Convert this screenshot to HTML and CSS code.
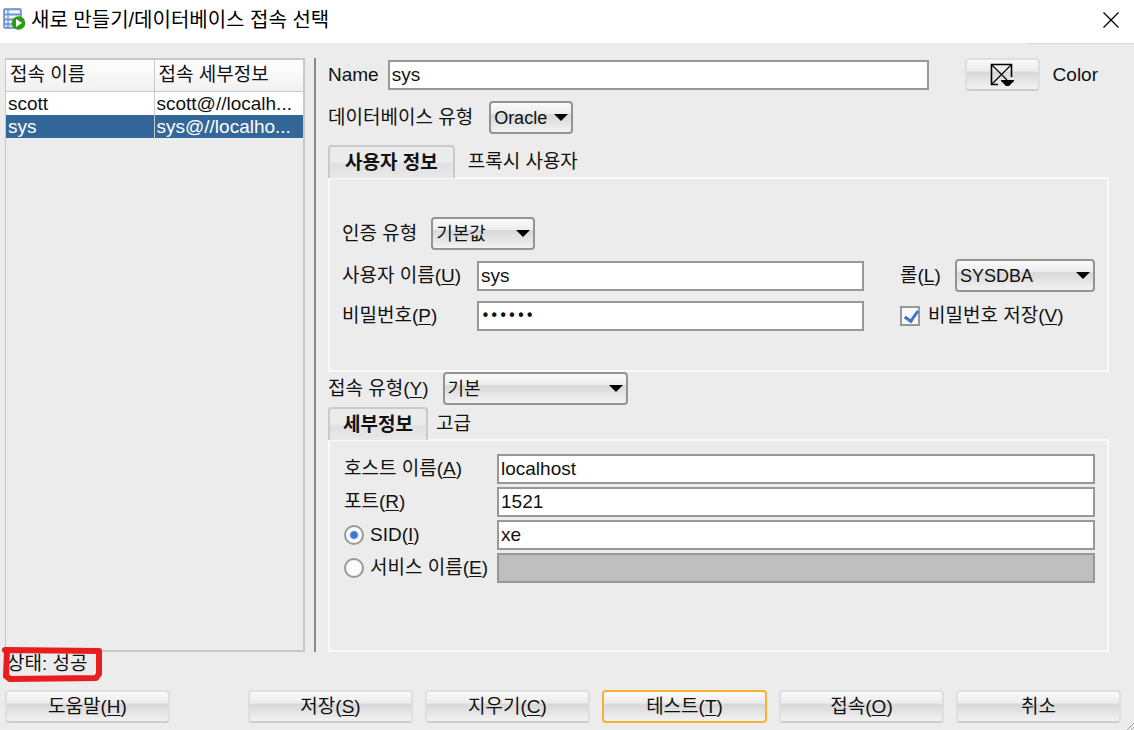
FILE: index.html
```html
<!DOCTYPE html>
<html lang="ko">
<head>
<meta charset="UTF-8">
<meta name="viewport" content="width=device-width, initial-scale=1.0">
<title>새로 만들기/데이터베이스 접속 선택</title>
<link rel="stylesheet" href="styles.css">
</head>
<body>

<header class="titlebar">
  <svg class="app-icon" width="23" height="23" viewBox="0 0 23 23">
    <rect x="1" y="1" width="17" height="19" rx="1" fill="#c3d6f3" stroke="#6488c4" stroke-width="1.500"/>
    <path d="M2.500 4h14M2.500 9h14M2.500 14h8" stroke="#f2f7ff" stroke-width="2"/>
    <path d="M5 1v19M1 6.500h17M1 11.500h17M1 16h10" stroke="#6f94d0" stroke-width="1.300"/>
    <circle cx="15.500" cy="15" r="6.800" fill="#2c9c15"/>
    <path d="M13 11v8l6-4z" fill="#fff"/>
  </svg>
  <h1>새로 만들기/데이터베이스 접속 선택</h1>
  <button class="close" aria-label="닫기">
    <svg width="16" height="16" viewBox="0 0 16 16"><path d="M.5.5l15 15M15.500.5l-15 15" stroke="#000" stroke-width="1.300"/></svg>
  </button>
</header>

<main class="content">
  <section class="connections">
    <table>
      <thead>
        <tr><th>접속 이름</th><th>접속 세부정보</th></tr>
      </thead>
      <tbody>
        <tr><td>scott</td><td>scott@//localh...</td></tr>
        <tr class="selected"><td>sys</td><td>sys@//localho...</td></tr>
      </tbody>
    </table>
  </section>

  <form class="details" id="connection">
    <div class="row name-row">
      <label for="name">Name</label>
      <input class="text" type="text" id="name" value="sys">
      <button type="button" class="button color-button" id="color">
        <svg width="24" height="24" viewBox="0 0 24 24">
          <path d="M8 21.500H1.500V1.500h20V14" fill="none" stroke="#000" stroke-width="1.600"/>
          <path d="M2 2l15 15M21 2L2 21" stroke="#000" stroke-width="1.200"/>
          <path d="M11 17h13v1l-5 5h-3l-5-5z" fill="#000"/>
        </svg>
      </button>
      <label class="color-label" for="color">Color</label>
    </div>

    <div class="row type-row">
      <label for="dbtype">데이터베이스 유형</label>
      <span class="select small"><select id="dbtype"><option>Oracle</option></select></span>
    </div>

    <div class="tabs">
      <button type="button" class="tab active">사용자 정보</button>
      <button type="button" class="tab">프록시 사용자</button>
    </div>
    <div class="panel user-panel">
      <div class="row">
        <label for="auth">인증 유형</label>
        <span class="select medium"><select id="auth"><option>기본값</option></select></span>
      </div>
      <div class="row">
        <label class="field-label" for="user">사용자 이름(<u>U</u>)</label>
        <input class="text" type="text" id="user" value="sys">
        <div class="side">
          <label for="role">롤(<u>L</u>)</label>
          <span class="select"><select id="role"><option>SYSDBA</option></select></span>
        </div>
      </div>
      <div class="row">
        <label class="field-label" for="password">비밀번호(<u>P</u>)</label>
        <input class="text password" type="password" id="password" value="oracle">
        <div class="side">
          <input class="check" type="checkbox" id="save" checked>
          <label for="save">비밀번호 저장(<u>V</u>)</label>
        </div>
      </div>
    </div>

    <div class="row">
      <label for="conntype">접속 유형(<u>Y</u>)</label>
      <span class="select large"><select id="conntype"><option>기본</option></select></span>
    </div>

    <div class="tabs detail-tabs">
      <button type="button" class="tab active">세부정보</button>
      <button type="button" class="tab">고급</button>
    </div>
    <div class="panel host-panel">
      <div class="row">
        <label class="host-label" for="host">호스트 이름(<u>A</u>)</label>
        <input class="text" type="text" id="host" value="localhost">
      </div>
      <div class="row">
        <label class="host-label" for="port">포트(<u>R</u>)</label>
        <input class="text" type="text" id="port" value="1521">
      </div>
      <div class="row">
        <div class="host-label">
          <input class="radio" type="radio" name="target" id="use-sid" checked>
          <label for="use-sid">SID(<u>I</u>)</label>
        </div>
        <input class="text" type="text" value="xe" aria-label="SID">
      </div>
      <div class="row">
        <div class="host-label">
          <input class="radio" type="radio" name="target" id="use-service">
          <label for="use-service">서비스 이름(<u>E</u>)</label>
        </div>
        <input class="text" type="text" aria-label="서비스 이름" disabled>
      </div>
    </div>
  </form>
</main>

<div class="status">
  <span>상태: 성공</span>
  <svg class="marker" width="104" height="38" viewBox="0 0 104 38">
    <path d="M5 4L99 5 99 28 96 32 10 33 6 30 7 5" fill="none" stroke="#e81d1d" stroke-width="6" stroke-linejoin="round" stroke-linecap="round"/>
  </svg>
</div>

<footer class="actions">
  <button class="button help">도움말(<u>H</u>)</button>
  <button class="button">저장(<u>S</u>)</button>
  <button class="button">지우기(<u>C</u>)</button>
  <button class="button default">테스트(<u>T</u>)</button>
  <button class="button">접속(<u>O</u>)</button>
  <button class="button">취소</button>
  <svg class="grip" width="7" height="7" viewBox="0 0 7 7">
    <path d="M0 7L7 0M4 7l3-3" stroke="#a9a99b" stroke-width="1"/>
  </svg>
</footer>

</body>
</html>
```
FILE: styles.css
```css
* {
  box-sizing: border-box;
}
body {
  display: flex;
  flex-direction: column;
  min-height: 100vh;
  margin: 0;
  background-color: #ececec;
  color: #111;
  font-family: "Liberation Sans", "Noto Sans CJK KR", sans-serif;
  font-size: 19px;
  line-height: 24px;
}
button, input, select {
  font: inherit;
  color: inherit;
}
label {
  white-space: nowrap;
}
u {
  text-decoration-thickness: 1px;
  text-underline-offset: 2px;
}

/* title bar */
.titlebar {
  position: relative;
  display: flex;
  align-items: center;
  height: 43px;
  padding: 0 15px 4px 3px;
  background-color: #fff;
}
.titlebar::after {
  content: "";
  position: absolute;
  right: 0;
  bottom: -1px;
  width: 106px;
  height: 1px;
  background-color: #d6d6d6;
}
.titlebar h1 {
  flex: 1;
  margin: 0 0 0 5px;
  font-size: 20px;
  font-weight: 400;
  color: #000;
}
.close {
  display: flex;
  padding: 0;
  border: none;
  background: none;
}

.content {
  display: flex;
  flex: 1;
  padding: 15px 25px 0 5px;
}

/* list of connections */
.connections {
  flex: 0 0 300px;
  border: 2px solid #c8c8c8;
  border-left-width: 1px;
}
.connections table {
  width: 100%;
  table-layout: fixed;
  border-collapse: collapse;
}
.connections th {
  height: 31px;
  padding: 0 4px;
  border-bottom: 1px solid #c8c8c8;
  background: linear-gradient(#fff, #f0f0f0);
  font-weight: 400;
  text-align: left;
}
.connections th:first-child {
  width: 148px;
}
.connections td {
  height: 23px;
  padding: 0 2px;
  background-color: #fff;
  line-height: 23px;
  white-space: nowrap;
  overflow: hidden;
}
.connections th + th,
.connections td + td {
  border-left: 1px solid #c8c8c8;
}
.connections .selected td {
  background-color: #336799;
  color: #fff;
}

/* right side */
.details {
  display: flex;
  flex: 1;
  flex-direction: column;
  margin-left: 9px;
  padding-left: 12px;
  border-left: 2px solid #8b8b8b;
}
.row {
  display: flex;
  align-items: center;
  gap: 14px;
}
.text {
  flex: 1;
  min-width: 0;
  height: 30px;
  padding: 0 2px;
  border: 2px solid #989898;
  border-radius: 0;
  background-color: #fff;
}
.text:disabled {
  background-color: #bfbfbf;
}
.password {
  font-family: "DejaVu Sans", sans-serif;
  font-size: 15px;
}
.name-row {
  gap: 9px;
  padding-right: 11px;
}
.color-button {
  width: 75px;
  margin-left: 27px;
}
.color-label {
  margin-left: 4px;
}
.type-row {
  gap: 16px;
  margin-top: 10px;
}

.select {
  position: relative;
  display: flex;
  flex: 1;
  font-size: 18px;
}
.select select {
  appearance: none;
  width: 100%;
  height: 33px;
  padding: 0 3px;
  border: 2px solid #949494;
  border-radius: 4px;
  background: linear-gradient(#fafafa, #ececec 38%, #d8d8d8 40%, #f2f2f2);
}
.select::after {
  content: "";
  position: absolute;
  top: 13px;
  right: 5px;
  border: 7px solid transparent;
  border-top-color: #000;
  border-bottom: none;
  pointer-events: none;
}
.select.small {
  flex: 0 0 84px;
}
.select.medium {
  flex: 0 0 104px;
}
.select.large {
  flex: 0 0 185px;
}

/* tabs */
.tabs {
  display: flex;
  margin-top: 11px;
}
.tab {
  height: 33px;
  padding: 0 13px;
  border: none;
  background: none;
}
.tab.active {
  position: relative;
  padding: 0 15px;
  border: 2px solid #cacaca;
  border-bottom: none;
  border-radius: 4px 4px 0 0;
  background: linear-gradient(#ebebeb 50%, #e0e1e2 52%, #e8e8e9);
  font-weight: 700;
}
.panel {
  display: flex;
  flex-direction: column;
  margin-top: -1px;
  border: 2px solid #fafafa;
}
.user-panel {
  gap: 9px;
  padding: 38px 12px 39px;
}
.field-label {
  width: 121px;
}
.side {
  display: flex;
  align-items: center;
  gap: 8px;
  width: 195px;
  margin-left: 22px;
}
.side .select {
  flex: 0 0 140px;
  margin-left: auto;
}
.detail-tabs {
  margin-top: 2px;
}
.detail-tabs .tab {
  padding: 0 8px;
}
.detail-tabs .tab.active {
  padding: 0 13px;
}
.host-panel {
  flex: 1;
  gap: 3px;
  padding: 13px 12px;
}
.host-panel .row {
  gap: 0;
}
.host-label {
  display: flex;
  align-items: center;
  width: 155px;
  padding-left: 2px;
}

.check, .radio {
  appearance: none;
  flex: none;
  width: 20px;
  height: 20px;
  margin: 0;
  border: 2px solid #989898;
  background-color: #fafafa;
}
.check:checked::after {
  content: "";
  display: block;
  width: 6px;
  height: 11px;
  margin: 0 0 0 5px;
  border: solid #3c74cf;
  border-width: 0 3px 3px 0;
  transform: rotate(35deg);
}
.radio {
  margin-right: 6px;
  border-radius: 50%;
}
.radio:checked {
  background: radial-gradient(circle, #3f74d0 3px, #fafafa 5px);
}

/* status line */
.status {
  position: relative;
  padding: 0 7px;
}
.marker {
  position: absolute;
  left: 0;
  top: -6px;
}

/* bottom buttons */
.actions {
  position: relative;
  display: flex;
  gap: 12px;
  padding: 14px 13px 7px 5px;
}
.button {
  display: flex;
  align-items: center;
  justify-content: center;
  height: 33px;
  padding: 0;
  border: 2px solid #dfdfdf;
  border-bottom-color: #cdcdcd;
  border-radius: 4px;
  background: linear-gradient(#fafafa, #ececec 38%, #d8d8d8 42%, #f2f2f2);
}
.actions .button {
  flex: 1;
  white-space: pre;
}
.actions .help {
  margin-right: 66px;
}
.actions .default {
  border-color: #f7b236;
}
.grip {
  position: absolute;
  right: 0;
  bottom: 0;
}
```
